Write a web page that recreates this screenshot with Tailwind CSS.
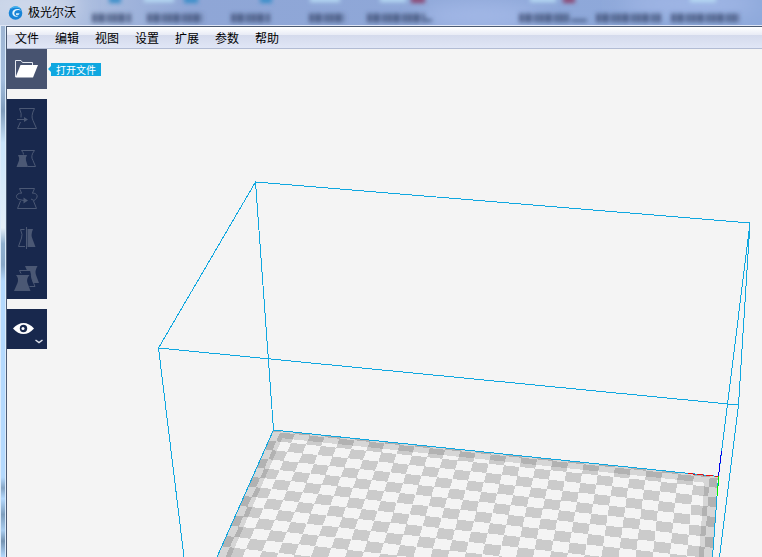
<!DOCTYPE html>
<html lang="zh-CN">
<head>
    <meta charset="UTF-8">
    <meta name="viewport" content="width=device-width, initial-scale=1.0">
    <title>极光尔沃</title>
    <script src="https://cdn.jsdelivr.net/npm/@tailwindcss/browser@4"></script>
</head>
<body class="h-screen flex flex-col overflow-hidden bg-[#b4d6fb] text-xs text-black font-['Noto_Sans','Noto_Sans_CJK_SC',sans-serif]">

<!-- title bar -->
<header class="relative shrink-0 h-[26px] overflow-hidden border-b border-[#dfe6f6] bg-linear-to-r from-[#c3d0e6] via-[#8fa6d6] via-25% to-[#8ea9db]">
    <svg class="absolute inset-0 w-full h-full" aria-hidden="true">
        <defs>
            <filter id="soft" x="-20%" y="-100%" width="140%" height="300%"><feGaussianBlur stdDeviation="2"/></filter>
            <filter id="glow" x="-50%" y="-100%" width="200%" height="300%"><feGaussianBlur stdDeviation="10"/></filter>
        </defs>
        <g filter="url(#glow)">
            <ellipse cx="35" cy="6" rx="45" ry="12" fill="#d3dcec"/>
            <ellipse cx="480" cy="16" rx="60" ry="12" fill="#a4b9e8"/>
            <ellipse cx="690" cy="4" rx="70" ry="10" fill="#a4b9e8"/>
        </g>
        <g filter="url(#soft)">
            <!-- desktop labels behind the glass, wavy dashes instead of letters -->
            <g stroke="#3a4b70" stroke-opacity=".75" stroke-width="9" stroke-dasharray="5 1 7 2 4 1">
                <path d="M92 18H132M147 18H203M231 18H270M309 18H345M367 18H425M519 18H569M596 18H662M671 18H739"/>
            </g>
            <g fill="#4f658f">
                <rect x="425" y="19" width="7" height="3"/>
                <rect x="571" y="19" width="16" height="3"/>
            </g>
            <g fill="#3b8ec9">
                <rect x="109" y="-3" width="12" height="6"/>
                <rect x="184" y="-3" width="14" height="6"/>
                <rect x="260" y="-3" width="12" height="6"/>
            </g>
            <g fill="#b7dcf4">
                <rect x="144" y="-3" width="30" height="5"/>
                <rect x="310" y="-3" width="30" height="5"/>
                <rect x="380" y="-3" width="26" height="5"/>
                <rect x="530" y="-3" width="26" height="5"/>
                <rect x="690" y="-3" width="26" height="5"/>
            </g>
            <g fill="#8b4672">
                <rect x="411" y="-3" width="14" height="6"/>
                <rect x="563" y="-3" width="12" height="6"/>
            </g>
        </g>
    </svg>
    <div class="relative flex items-center h-[25px] pl-2 gap-1">
        <svg class="size-4" viewBox="0 0 16 16" aria-hidden="true">
            <circle cx="7.5" cy="8" r="6.8" fill="#1684d8"/>
            <path d="M2 4.500A6.800 6.800 0 0 1 13.500 4.500C10 2 5 2.500 2 4.500Z" fill="#49b8f0"/>
            <path d="M13 5.500C10 2.800 4.500 4 4.300 8c0 3 3.500 4.600 6 3.200-2.600.2-4.300-1.200-4-3.200.3-2.600 3.500-3.900 6.700-2.500Z" fill="#e6f5fd"/>
            <path d="M8 8.200h3.500c-.2 1.700-2 2.600-3.500 1.700Z" fill="#cfeafa"/>
        </svg>
        <h1>极光尔沃</h1>
    </div>
</header>

<div class="flex flex-1 min-h-0">
    <!-- window frame, left side -->
    <div class="w-1.5 shrink-0 border-x border-[#dcebfb] bg-linear-to-b from-[#9fb6d4] via-[#b4d9fd] via-50% to-[#b4d9fd]">
        <div class="h-full bg-[linear-gradient(to_bottom,transparent_10%,#7f9cbb_16%,#c9e4fb_22%,#e4eff9_38%,#8fb0cf_41%,#88a8c8_45%,transparent_48%,transparent_85%,#86a5c4_87%,#b4d9fd_89%,#7f9fbe_92%,#a9cdef_95%,#7593b1_97%,#b4d9fd_100%)]"></div>
    </div>

    <div class="flex flex-col flex-1 min-w-0 border-l border-t border-[#4b5a72]">
        <nav class="shrink-0 flex h-[22px] pt-0.5 border-b border-[#b2bcd4] bg-[linear-gradient(to_bottom,#fff_0%,#e9ecf6_36%,#d4daec_38%,#e0e6f6_100%)]">
            <button class="px-2">文件</button>
            <button class="px-2">编辑</button>
            <button class="px-2">视图</button>
            <button class="px-2">设置</button>
            <button class="px-2">扩展</button>
            <button class="px-2">参数</button>
            <button class="px-2">帮助</button>
        </nav>

        <main class="relative flex-1 min-h-0 overflow-hidden bg-[#f4f4f4]">
            <!-- 3D view: build volume and platform -->
            <svg class="absolute inset-0 w-full h-full" fill="none" aria-hidden="true">
                <g transform="translate(-7 -49)" shape-rendering="crispEdges">
                    <path id="cells" fill="#cbcbcb"/>
                    <path id="rim" fill="#000" fill-opacity=".12" fill-rule="evenodd"/>
                    <g stroke="#0fa7e0">
                        <path d="M255.500 182L750 223L738.500 405L158.500 348Z"/>
                        <path d="M255.500 182L273.500 430L718.500 476.500L750 223"/>
                        <path d="M158.500 348L184 557L209 760M738.500 405L719.500 557L694 760"/>
                        <path d="M273.500 430L217 557L127 760M718.500 476.500L712.500 557L699 760"/>
                    </g>
                    <path stroke="#e80c0c" stroke-dasharray="7 2" d="M688 473.500L718 476.500"/>
                    <path stroke="#00f000" d="M718.500 476.500L717.500 496"/>
                    <path stroke="#0000e6" d="M718.500 476L721.500 451"/>
                </g>
            </svg>

            <!-- tool buttons -->
            <div class="relative flex flex-col items-start gap-2.5">
                <div class="flex items-center">
                    <button aria-label="打开文件" class="size-10 bg-[#475370]">
                        <svg class="size-10" viewBox="0 0 40 40">
                            <path d="M8.500 28V11.500H14L15.500 13.500H25.500V16" fill="none" stroke="#e4e8f0"/>
                            <path d="M13.500 16H31L26 28.500H8.500Z" fill="#fff"/>
                        </svg>
                    </button>
                    <span class="w-0 h-0 ml-px border-y-[3px] border-y-transparent border-r-[3px] border-r-[#0fa7e0]"></span>
                    <span role="tooltip" class="h-[13px] px-[5px] leading-[14px] text-[10px] text-white bg-[#0fa7e0]">打开文件</span>
                </div>

                <div class="flex flex-col bg-[#18284d] text-[#4b5874]">
                    <button aria-label="移动" class="size-10">
                        <svg class="size-10" viewBox="0 0 40 40" fill="none" stroke="currentColor">
                            <path d="M14 18.500Q15 15 12.500 9.500H27.500Q23.500 17 26 21.500L29.500 29.500H10.500L13.500 23"/>
                            <path d="M10 20.500H18"/>
                            <path d="M17 18L21 20.500L17 23Z" fill="currentColor" stroke="none"/>
                        </svg>
                    </button>
                    <button aria-label="缩放" class="size-10">
                        <svg class="size-10" viewBox="0 0 40 40" fill="none" stroke="currentColor">
                            <path d="M16.500 15.500Q16.500 13.500 14.500 11.500H27.500Q23 17 26 21.500L28.500 27.500H21"/>
                            <path d="M11 16H20Q18.500 18.500 19 21.500L21 28H9.500L12 21.500Q12.500 18.500 11 16Z" fill="currentColor" stroke="none"/>
                        </svg>
                    </button>
                    <button aria-label="旋转" class="size-10">
                        <svg class="size-10" viewBox="0 0 40 40" fill="none" stroke="currentColor">
                            <path d="M14.500 14L12.500 9.500H27.500L25.500 14M13.500 22L10.500 29.500H29.500L26.500 22"/>
                            <path d="M15 14C8.500 14 8 19 12 20.500L17 21.500M25 14C31.500 14 31.500 19 27 21.500L24 20"/>
                            <path d="M16.500 18.500L21 21.500L16.500 24.500Z" fill="currentColor" stroke="none"/>
                        </svg>
                    </button>
                    <button aria-label="镜像" class="size-10">
                        <svg class="size-10" viewBox="0 0 40 40" fill="none" stroke="currentColor">
                            <path d="M19.500 8V30"/>
                            <path d="M17.500 10.500H13.500Q16 16 14.500 19L11.500 27.500H18"/>
                            <path d="M20.500 10H26Q23.500 16 25.500 20L28.500 28H20.500Z" fill="currentColor" stroke="none"/>
                        </svg>
                    </button>
                    <button aria-label="复制" class="size-10">
                        <svg class="size-10" viewBox="0 0 40 40" fill="none" stroke="currentColor">
                            <path d="M18 7H30.500Q27.500 12 29 16L32 24H26L23 11.500H20Z" fill="currentColor" stroke="none"/>
                            <path d="M14 14.500L12.500 11.500H26Q23 16 25 20L28 27.500H22.500"/>
                            <path d="M9 16H22.500Q19 20 20.500 24L23.500 32H7L10.500 24Q12 19 9 16Z" fill="currentColor" stroke="none"/>
                        </svg>
                    </button>
                </div>

                <button aria-label="视图模式" class="size-10 bg-[#18284d]">
                    <svg class="size-10" viewBox="0 0 40 40">
                        <path d="M6 19.500Q11 14 16.500 14T27 19.500Q22 25 16.500 25T6 19.500Z" fill="#fff"/>
                        <circle cx="16.500" cy="19.500" r="3.700" fill="#18284d"/>
                        <circle cx="16" cy="19.500" r="1.500" fill="#fff"/>
                        <path d="M28.500 31L32 33.500L35.500 31" fill="none" stroke="#dfe3ec" stroke-width="1.500"/>
                    </svg>
                </button>
            </div>
        </main>
    </div>
</div>

<script>
    // perspective of the platform: back left corner and the two vanishing points
    const origin = [273.5, 430];
    const vanishX = [-11090, -757];
    const vanishY = [798, -748];
    const stepX = -0.0012973;
    const stepY = -0.00737;
    const cols = 29;
    const rows = 34;

    function project(u, v) {
        const a = u * stepX;
        const b = v * stepY;
        const w = 1 + a + b;
        return [0, 1].map(i => ((origin[i] + a * vanishX[i] + b * vanishY[i]) / w).toFixed(2)).join(" ");
    }

    function quad(u0, v0, u1, v1) {
        return "M" + [project(u0, v0), project(u1, v0), project(u1, v1), project(u0, v1)].join("L") + "Z";
    }

    let cells = "";
    for (let r = 0; r < rows; r++) {
        for (let c = 0; c <= cols; c++) {
            if ((r + c) % 2 === 1) continue;
            cells += quad(Math.max(0, c - 0.5), Math.max(0, r - 0.8), Math.min(cols, c + 0.5), r + 0.2);
        }
    }
    document.getElementById("cells").setAttribute("d", cells);
    document.getElementById("rim").setAttribute("d", quad(0, 0, cols, rows) + quad(0.8, 0.8, cols - 0.8, rows));
</script>
</body>
</html>
